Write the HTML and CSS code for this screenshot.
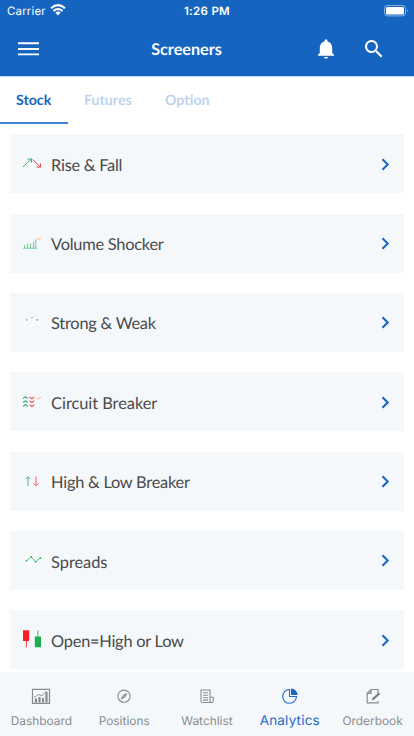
FILE: index.html
```html
<!DOCTYPE html>
<html lang="en">
<head>
<meta charset="utf-8">
<title>Screeners</title>
<link rel="stylesheet" href="styles.css">
</head>
<body>
<div class="app">
  <header class="header">
    <div class="status">
      <div class="carrier"><span>Carrier</span>
        <svg width="16" height="12" viewBox="0 0 16 12" fill="none" stroke="#fff" stroke-width="2"><path d="M1 4.2Q8-2 15 4.2M3.400 7Q8 3 12.600 7"/><path d="M5.300 8.600Q8 6.300 10.700 8.600L8 11.400Z" fill="#fff" stroke="none"/></svg>
      </div>
      <span class="time">1:26 PM</span>
      <svg class="battery" width="25" height="12" viewBox="0 0 25 12"><rect x=".5" y=".5" width="21" height="10.4" rx="3" fill="none" stroke="#fff" stroke-opacity=".5"/><rect x="2" y="2" width="18" height="7.4" rx="1.5" fill="#fff"/><path d="M23 4Q24.500 5.700 23 7.400Z" fill="#fff" opacity=".6"/></svg>
    </div>
    <div class="bar">
      <svg class="menu" width="21" height="14" viewBox="0 0 21 14" fill="#fff"><path d="M0 .3h21v1.900H0zM0 6h21v1.900H0zM0 11.400h21v1.900H0z"/></svg>
      <h1 class="title">Screeners</h1>
      <div class="actions">
        <svg width="24" height="24" viewBox="0 0 24 24" fill="#fff"><path d="M12 21.600c1.200 0 2-.7 2-1.700h-4c0 1 .8 1.700 2 1.700zM18.200 16v-5.200c0-3.200-1.700-5.700-4.700-6.400v-.7a1.500 1.500 0 0 0-3 0v.7c-3 .7-4.700 3.200-4.700 6.400V16L4 17.800v1h16v-1z"/></svg>
        <svg width="24" height="24" viewBox="0 0 24 24" fill="#fff"><path d="M15.500 14h-.79l-.28-.27A6.500 6.500 0 1 0 13.730 14.430l.27.28v.79l5 5L20.500 19zM9.500 14a4.500 4.500 0 1 1 0-9 4.500 4.500 0 0 1 0 9z"/></svg>
      </div>
    </div>
  </header>
  <nav class="tabs">
    <a class="tab active">Stock</a><a class="tab futures">Futures</a><a class="tab option">Option</a>
  </nav>
  <main class="list">
    <div class="card">
      <svg class="icon" viewBox="0 0 20 20" fill="none"><path d="M1 13.800 9.500 6M5.500 6h4v3.500" stroke="#35ae63"/><path d="m10.500 6.500 8 7.500M14.500 14h4v-3.500" stroke="#f04747"/></svg>
      <span class="label">Rise &amp; Fall</span><svg class="chevron" viewBox="0 0 9 13"><path d="m1.500 1.300 5.200 5.200-5.200 5.200"/></svg>
    </div>
    <div class="card">
      <svg class="icon" viewBox="0 0 20 20" fill="none"><path d="M1 15.200h14M2.500 15v-3M5.500 15v-4.500M8.500 15v-4.500M11.500 15V8.500M13.800 15V6.500" stroke="#71cc95"/><path d="M14.500 6.900 16 5.900h1.300L19 4.900" stroke="#ffb477"/></svg>
      <span class="label">Volume Shocker</span><svg class="chevron" viewBox="0 0 9 13"><path d="m1.500 1.300 5.200 5.200-5.200 5.200"/></svg>
    </div>
    <div class="card">
      <svg class="icon" viewBox="0 0 20 20"><path d="M1 13.500a9 8.500 0 0 1 18 0h-3.500a5.500 5.500 0 0 0-2-3.500l-2 3.500a1.800 1.800 0 1 1-1-2l1-3a5.500 5.500 0 0 0-7 5z" fill="#fff" opacity=".75"/><circle cx="4.800" cy="7.900" r=".8" fill="#40bd78"/><circle cx="10" cy="5.800" r=".8" fill="#40bd78"/><circle cx="15.200" cy="7.900" r=".8" fill="#f04747"/></svg>
      <span class="label">Strong &amp; Weak</span><svg class="chevron" viewBox="0 0 9 13"><path d="m1.500 1.300 5.200 5.200-5.200 5.200"/></svg>
    </div>
    <div class="card">
      <svg class="icon" viewBox="0 0 20 20" fill="none"><path d="m1 7.600 2.400-1.800 2.400 1.800M1 11.500l2.400-1.800 2.400 1.800M1 15.400l2.400-1.800 2.400 1.800" stroke="#45ba79" stroke-width="1.200"/><path d="m7.500 5.900 2.400 1.800 2.400-1.800M7.500 9.800l2.400 1.800 2.400-1.800M7.500 13.700l2.400 1.800 2.400-1.800" stroke="#f25b65" stroke-width="1.200"/><path d="M14.500 8.200 16 7.200h1.300L19 6.200" stroke="#ffb477"/></svg>
      <span class="label loose">Circuit Breaker</span><svg class="chevron" viewBox="0 0 9 13"><path d="m1.500 1.300 5.200 5.200-5.200 5.200"/></svg>
    </div>
    <div class="card">
      <svg class="icon" viewBox="0 0 20 20" fill="none"><path d="M6 15V6M3.500 8.200 6 5.700l2.500 2.500" stroke="#45ba79"/><path d="M14 5.500V14.500m-2.500-2.200 2.500 2.500 2.500-2.500" stroke="#f25b65"/></svg>
      <span class="label">High &amp; Low Breaker</span><svg class="chevron" viewBox="0 0 9 13"><path d="m1.500 1.300 5.200 5.200-5.200 5.200"/></svg>
    </div>
    <div class="card">
      <svg class="icon" viewBox="0 0 20 20" fill="none"><circle cx="8" cy="10" r="6" fill="#fff" opacity=".65"/><path d="m4.500 10.800 4.700-4 4.300 5 5-4" stroke="#50c17c"/><g fill="#28b463"><circle cx="4.500" cy="10.800" r=".9"/><circle cx="9.200" cy="6.800" r=".9"/><circle cx="13.500" cy="11.800" r=".9"/><circle cx="18.400" cy="7.900" r=".9"/></g></svg>
      <span class="label loose">Spreads</span><svg class="chevron" viewBox="0 0 9 13"><path d="m1.500 1.300 5.200 5.200-5.200 5.200"/></svg>
    </div>
    <div class="card">
      <svg class="icon" viewBox="0 0 20 20"><path d="M1 1.200h6.200V12H1zM3.900 12h.8v6.500h-.8z" fill="#fa1d24"/><path d="M12.800 7.500H19v10.700h-6.200zM15.500 1.200h.8v6.500h-.8z" fill="#1eac50"/></svg>
      <span class="label">Open=High or Low</span><svg class="chevron" viewBox="0 0 9 13"><path d="m1.500 1.300 5.200 5.200-5.200 5.200"/></svg>
    </div>
  </main>
  <footer class="nav">
    <a class="item"><svg viewBox="0 0 20 20" fill="none" stroke="#898b8d"><path d="M1.500 3.300h17v14h-17z" stroke-width="1.200"/><path d="M5 16.500v-4M8.500 16.500V11M12 16.500v-4.500M15.500 16.500V6" stroke-width="2.200"/><path d="m3 11.500 4.500-3 3.500 1.300L15.500 5" stroke-width=".9"/></svg><span>Dashboard</span></a>
    <a class="item"><svg viewBox="0 0 20 20" fill="none" stroke="#898b8d"><circle cx="10" cy="10.200" r="6.100" stroke-width="1.100"/><path d="m7 13.200 2-4 4-2-2 4z" fill="#898b8d" stroke-width=".6"/><circle cx="10" cy="10.200" r=".6" fill="#f4f8fb" stroke="none"/></svg><span>Positions</span></a>
    <a class="item"><svg viewBox="0 0 20 20" fill="none" stroke="#898b8d"><path d="M13 11.300V4H4v11q0 1.500 1.500 1.500h9.500q1.300 0 1.300-1.500v-3.700H13V15q0 1.500 1.500 1.500M6 6.700h5M6 9.200h5M6 11.700h5M6 14.100h5" stroke-width="1.100"/></svg><span>Watchlist</span></a>
    <a class="item active"><svg viewBox="0 0 20 20" fill="none" stroke="#1d6acb"><path d="M9.500 3.500a6.900 6.900 0 1 0 7 7h-7z" stroke-width="1.100"/><path d="M11 2.500a6.500 6.500 0 0 1 6.500 6.500H11z" fill="#1565c0" stroke="none"/></svg><span>Analytics</span></a>
    <a class="item"><svg viewBox="0 0 20 20" fill="none" stroke="#898b8d"><path d="M15 8V3.500H8L4.200 7.300v9.600H15v-2M4.500 7.300H8V3.500" stroke-width="1.200"/><path d="m8.800 14.500.7-2.500 6.500-5.500 1.200 1.400-6 5.700z" fill="#77797b" stroke="none"/></svg><span>Orderbook</span></a>
  </footer>
</div>
</body>
</html>
```
FILE: styles.css
```css
* { box-sizing: border-box; }
body { margin: 0; background: #fff; font-family: Lato, sans-serif; text-rendering: geometricPrecision; }
.app { height: 736px; display: flex; flex-direction: column; overflow: hidden; }
.header { height: 76px; flex: none; background: #1565c0; color: #fff; box-shadow: 0 1px 0 #cbdcf1; }
.status { height: 22px; display: grid; grid-template-columns: 1fr 60px 1fr; align-items: center; padding: 0 5px 0 7px; font: 11.5px/22px Inter, sans-serif; }
.carrier { display: flex; align-items: center; gap: 4px; letter-spacing: .15px; }
.carrier svg { margin-top: -2px; }
.time { font-weight: 600; text-align: center; white-space: nowrap; font-size: 11.5px; letter-spacing: .3px; margin-left: -2px; }
.battery { justify-self: end; margin-top: -1px; }
.bar { height: 54px; display: grid; grid-template-columns: 100px 1fr 100px; align-items: center; padding: 0 18px; }
.title { margin: 2px 0 0; text-align: center; font-size: 16.200px; line-height: 24px; font-weight: 700; padding-right: 41px; }
.menu { margin-top: -1px; }
.actions { display: flex; gap: 24px; justify-content: flex-end; padding-right: 10px; margin-top: -1px; }
.tabs { height: 49px; flex: none; display: flex; }
.tab { width: 68px; padding: 16px 0 0 16px; font-weight: 700; font-size: 14.200px; line-height: 17px; color: #bdd3ef; }
.tab.futures { width: 81px; }
.tab.active { height: 48px; color: #1565c0; border-bottom: 2px solid #4286d3; }
.list { flex: 1; min-height: 0; overflow: hidden; display: flex; flex-direction: column; gap: 20.350px; padding: 9.300px 10.400px 0; }
.card { height: 59px; flex: none; display: flex; align-items: center; background: #f4f8fb; padding: 2px 14px 0 12px; }
.icon { width: 20px; height: 20px; margin-top: -3px; flex: none; }
.label { margin: 2px 0 0 8.700px; font-size: 16.400px; line-height: 22px; letter-spacing: -.25px; color: #4a4a4a; white-space: nowrap; }
.label.loose { letter-spacing: -.04px; }
.chevron { width: 9px; height: 13px; margin: -1.500px 0 0 auto; fill: none; stroke: #1565c0; stroke-width: 2; }
.nav { height: 64px; flex: none; display: grid; grid-template-columns: repeat(5, 1fr); background: #f4f8fb; font-family: Inter, sans-serif; color: #898b8d; }
.item { display: flex; flex-direction: column; align-items: center; padding-top: 14px; font-size: 11.900px; }
.item svg { width: 20px; height: 20px; flex: none; }
.item span { line-height: 18px; margin-top: 6px; letter-spacing: 0; }
.item.active { color: #1d6acb; font-size: 13.500px; }
.item.active span { margin-top: 5.500px; letter-spacing: .2px; }
```
